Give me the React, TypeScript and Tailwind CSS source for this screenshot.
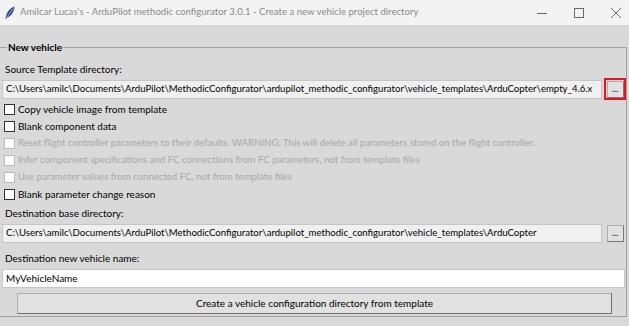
import React from "react";

const font = { fontFamily: 'Lato, "Open Sans", sans-serif' };

function Check({ label, disabled }: { label: string; disabled?: boolean }) {
  return (
    <div className="flex items-center h-[17px] pl-[4px] gap-[3px]">
      <span
        className={
          "w-[11px] h-[11px] border bg-white shrink-0 " +
          (disabled ? "border-[#bcbcbc]" : "border-[#333333]")
        }
      />
      <span className={"whitespace-nowrap " + (disabled ? "text-[#a8a8a8] text-[9.6px]" : "text-black")}>{label}</span>
    </div>
  );
}

function Browse({ highlight }: { highlight?: boolean }) {
  return (
    <div
      className={
        "w-[22px] h-[22px] flex items-center justify-center shrink-0 " +
        (highlight ? "border-2 border-[#e81123]" : "")
      }
    >
      <button className="w-[17px] h-[17px] bg-[#e1e1e1] border border-[#adadad] border-b-[#7a7a7a] border-r-[#7a7a7a] text-[9px] leading-none pb-[4px] flex items-end justify-center">
        ...
      </button>
    </div>
  );
}

export default function App() {
  return (
    <div className="w-[629px] h-[326px] bg-[#d9d9d9] text-[10px] overflow-hidden flex flex-col" style={font}>
      {/* title bar */}
      <div className="h-[25px] bg-[#f3f3f3] flex items-center shrink-0">
        <svg width="12" height="14" viewBox="0 0 12 14" className="ml-[4px] mr-[4px]">
          <path d="M10.5 0.5 C6 2 2.5 6 2 11 L1 13.5 L2.5 12 C7 10.5 10 6 10.5 0.5 Z" fill="#2c4a8a" />
          <path d="M9 2.5 L3 11" stroke="#a9c0e8" strokeWidth="0.8" />
        </svg>
        <span className="text-[#8a8a8a] text-[9.6px] whitespace-nowrap">
          Amilcar Lucas's - ArduPilot methodic configurator 3.0.1 - Create a new vehicle project directory
        </span>
        <div className="ml-auto mr-[-5px] flex items-center">
          <span className="w-[37px] flex justify-center">
            <svg width="10" height="10"><path d="M0 5.5 H10" stroke="#6a6a6a" strokeWidth="1" /></svg>
          </span>
          <span className="w-[37px] flex justify-center">
            <svg width="10" height="10"><rect x="0.5" y="0.5" width="9" height="9" fill="none" stroke="#6a6a6a" /></svg>
          </span>
          <span className="w-[37px] flex justify-center">
            <svg width="10" height="10"><path d="M0 0 L10 10 M10 0 L0 10" stroke="#6a6a6a" strokeWidth="1" /></svg>
          </span>
        </div>
      </div>

      <fieldset className="mt-[15px] mr-[2px] border border-[#a0a0a0] border-l-0 pb-[2px] px-0 min-w-0">
        <legend className="ml-[7px] px-[1px] font-bold text-[10px] leading-[14px]">New vehicle</legend>

        <div className="flex flex-col">
          <div className="h-[18px] flex items-center pl-[5px] mt-[6px]">Source Template directory:</div>
          <div className="flex items-center h-[22px] gap-[2px] pl-[2px]">
            <div className="flex-1 h-[19px] bg-[#f0f0f0] border border-[#c6c6c6] flex items-center pl-[3px] overflow-hidden whitespace-nowrap text-[9.6px]">
              C:\Users\amilc\Documents\ArduPilot\MethodicConfigurator\ardupilot_methodic_configurator\vehicle_templates\ArduCopter\empty_4.6.x
            </div>
            <Browse highlight />
          </div>

          <div className="flex flex-col mt-[1px]">
            <Check label="Copy vehicle image from template" />
            <Check label="Blank component data" />
            <Check disabled label="Reset flight controller parameters to their defaults. WARNING: This will delete all parameters stored on the flight controller." />
            <Check disabled label="Infer component specifications and FC connections from FC parameters, not from template files" />
            <Check disabled label="Use parameter values from connected FC, not from template files" />
            <Check label="Blank parameter change reason" />
          </div>

          <div className="h-[18px] flex items-center pl-[5px] mt-[1px]">Destination base directory:</div>
          <div className="flex items-center h-[22px] gap-[2px] pl-[2px]">
            <div className="flex-1 h-[19px] bg-[#f0f0f0] border border-[#c6c6c6] flex items-center pl-[3px] overflow-hidden whitespace-nowrap text-[9.6px]">
              C:\Users\amilc\Documents\ArduPilot\MethodicConfigurator\ardupilot_methodic_configurator\vehicle_templates\ArduCopter
            </div>
            <Browse />
          </div>

          <div className="h-[18px] flex items-center pl-[5px] mt-[5px]">Destination new vehicle name:</div>
          <div className="pl-[2px] pr-[1px] mt-[2px]">
            <div className="h-[19px] bg-white border border-[#c6c6c6] flex items-center pl-[3px]">MyVehicleName</div>
          </div>

          <div className="pl-[17px] pr-[14px] mt-[5px]">
            <button className="w-full h-[21px] bg-[#e1e1e1] border border-[#adadad] border-b-[#6d6d6d] border-r-[#6d6d6d] flex items-center justify-center">
              Create a vehicle configuration directory from template
            </button>
          </div>
        </div>
      </fieldset>
    </div>
  );
}
